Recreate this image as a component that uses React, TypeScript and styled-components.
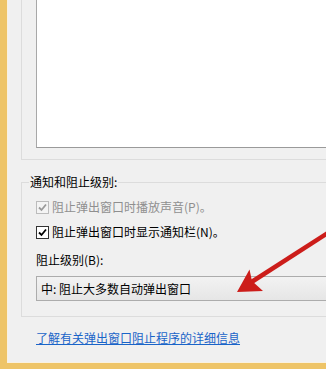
import React from 'react';
import styled, { createGlobalStyle } from 'styled-components';

const GlobalStyle = createGlobalStyle`
  html, body {
    margin: 0;
    padding: 0;
    background: #f0f0f0;
  }
  body {
    font-family: "Noto Sans CJK SC", "Noto Sans", sans-serif;
    font-size: 12px;
    color: #000;
  }
`;

const Frame = styled.div`
  position: relative;
  width: 326px;
  height: 369px;
  box-sizing: border-box;
  overflow: hidden;
  background: #f0f0f0;
  border-left: 7px solid #eec467;
  border-bottom: 6px solid #eec467;
`;

const Inner = styled.div`
  height: 100%;
  box-sizing: border-box;
  border-left: 1px solid #f9f1e0;
  border-bottom: 1px solid #f9f1e0;
  display: flex;
  flex-direction: column;
  width: 340px;
`;

const TopGroup = styled.div`
  margin-left: 13px;
  height: 160px;
  box-sizing: border-box;
  border-left: 1px solid #dcdcdc;
  border-bottom: 1px solid #dcdcdc;
  padding-left: 14px;
`;

const ListBox = styled.div`
  height: 148px;
  box-sizing: border-box;
  background: #fff;
  border-left: 1px solid #a8a8a8;
  border-bottom: 1px solid #9a9a9a;
`;

const Group = styled.fieldset`
  margin: 14px 0 0 13px;
  padding: 9px 0 15px 14px;
  border: 1px solid #dcdcdc;
  border-right: none;
  min-width: 0;
  display: flex;
  flex-direction: column;
`;

const Legend = styled.legend`
  margin-left: -7px;
  padding: 0 1px;
  line-height: 16px;
  color: #000;
`;

const Rows = styled.div`
  display: flex;
  flex-direction: column;
`;

const CheckRow = styled.label<{ disabled?: boolean }>`
  display: flex;
  align-items: center;
  gap: 3px;
  height: 16px;
  margin-bottom: 9px;
  line-height: 16px;
  color: ${({ disabled }) => (disabled ? '#8f8f8f' : '#000')};
`;

const Box = styled.span<{ disabled?: boolean }>`
  width: 13px;
  height: 13px;
  box-sizing: border-box;
  display: flex;
  align-items: center;
  justify-content: center;
  background: ${({ disabled }) => (disabled ? '#f4f4f4' : '#fff')};
  border: 1px solid ${({ disabled }) => (disabled ? '#bcbcbc' : '#333')};
`;

const FieldLabel = styled.div`
  margin-top: 3px;
  line-height: 16px;
  margin-bottom: 8px;
`;

const Select = styled.div`
  height: 25px;
  box-sizing: border-box;
  border: 1px solid #acacac;
  border-right: none;
  background: linear-gradient(#f2f2f2, #e6e6e6);
  display: flex;
  align-items: center;
  padding-left: 4px;
  line-height: 16px;
`;

const HelpLink = styled.a`
  margin: 13px 0 0 28px;
  line-height: 16px;
  color: #1a64c8;
  text-decoration: underline;
  align-self: flex-start;
`;

const ArrowLayer = styled.svg`
  position: absolute;
  left: -7px;
  top: 0;
  pointer-events: none;
`;

function Check({ color }: { color: string }) {
  return (
    <svg width="9" height="9" viewBox="0 0 9 9">
      <path d="M1 4.5 L3.5 7 L8 1.5" fill="none" stroke={color} strokeWidth="1.8" />
    </svg>
  );
}

export default function App() {
  return (
    <>
      <GlobalStyle />
      <Frame>
        <Inner>
          <TopGroup>
            <ListBox />
          </TopGroup>
          <Group>
            <Legend>通知和阻止级别:</Legend>
            <Rows>
              <CheckRow disabled>
                <Box disabled>
                  <Check color="#9a9a9a" />
                </Box>
                阻止弹出窗口时播放声音(P)。
              </CheckRow>
              <CheckRow>
                <Box>
                  <Check color="#000" />
                </Box>
                阻止弹出窗口时显示通知栏(N)。
              </CheckRow>
              <FieldLabel>阻止级别(B):</FieldLabel>
              <Select>中: 阻止大多数自动弹出窗口</Select>
            </Rows>
          </Group>
          <HelpLink href="#">了解有关弹出窗口阻止程序的详细信息</HelpLink>
        </Inner>
        <ArrowLayer width="326" height="369" viewBox="0 0 326 369">
          <line x1="334" y1="229" x2="250" y2="283" stroke="#cc1d1a" strokeWidth="4.5" />
          <polygon points="237,292 249.5,269.5 252,281 263,291" fill="#cc1d1a" />
        </ArrowLayer>
      </Frame>
    </>
  );
}
